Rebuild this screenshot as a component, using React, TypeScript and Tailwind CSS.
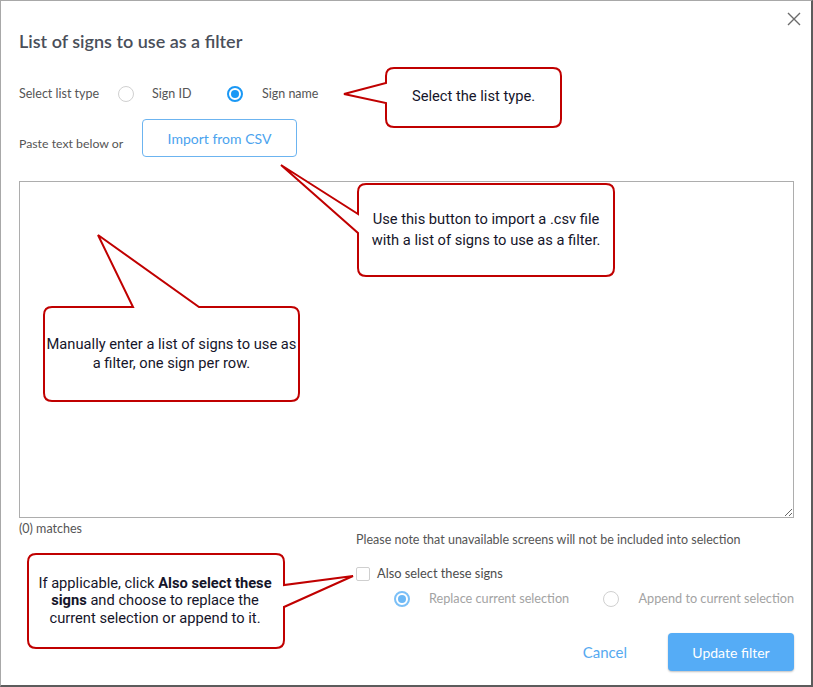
import React from "react";

const RED = "#c00000";

function Radio({ checked, disabled }: { checked?: boolean; disabled?: boolean }) {
  if (checked) {
    return (
      <span
        className={`flex h-[16px] w-[16px] shrink-0 items-center justify-center rounded-full border-2 ${
          disabled ? "border-[#7cc0f7]" : "border-[#1a98f5]"
        } bg-white`}
      >
        <span className={`h-[8px] w-[8px] rounded-full ${disabled ? "bg-[#6cb8f6]" : "bg-[#1a98f5]"}`} />
      </span>
    );
  }
  return <span className="h-[16px] w-[16px] shrink-0 rounded-full border border-[#d0d0d0] bg-white" />;
}

function Callouts() {
  return (
    <>
      <svg className="pointer-events-none absolute left-0 top-0" width={813} height={687} viewBox="0 0 813 687">
        <g fill="#fff" stroke={RED} strokeWidth={2} strokeLinejoin="miter">
          <path d="M 393 67 H 552 Q 560 67 560 75 V 118 Q 560 126 552 126 H 393 Q 385 126 385 118 V 102 L 343 93 L 385 82 V 75 Q 385 67 393 67 Z" />
          <path d="M 365 183 H 605 Q 613 183 613 191 V 267 Q 613 275 605 275 H 365 Q 357 275 357 267 V 232 L 280 164 L 357 213 V 191 Q 357 183 365 183 Z" />
          <path d="M 51 306 H 132 L 97 234 L 198 306 H 290 Q 298 306 298 314 V 392 Q 298 400 290 400 H 51 Q 43 400 43 392 V 314 Q 43 306 51 306 Z" />
          <path d="M 35 553 H 275 Q 283 553 283 561 V 584 L 352 575 L 283 606 V 639 Q 283 647 275 647 H 35 Q 27 647 27 639 V 561 Q 27 553 35 553 Z" />
        </g>
      </svg>
      <div className="pointer-events-none absolute left-[385px] top-[66px] flex h-[59px] w-[175px] items-center justify-center text-center font-['Roboto',sans-serif] text-[14.7px] text-[#15152a]">
        Select the list type.
      </div>
      <div className="pointer-events-none absolute left-[357px] top-[183px] flex h-[92px] w-[256px] items-center justify-center whitespace-nowrap text-center font-['Roboto',sans-serif] text-[14.7px] leading-[21px] text-[#15152a]">
        <span>
          Use this button to import a .csv file
          <br />
          with a list of signs to use as a filter.
        </span>
      </div>
      <div className="pointer-events-none absolute left-[43px] top-[306px] flex h-[94px] w-[255px] items-center justify-center whitespace-nowrap text-center font-['Roboto',sans-serif] text-[14.7px] leading-[19px] text-[#15152a]">
        <span>
          Manually enter a list of signs to use as
          <br />
          a filter, one sign per row.
        </span>
      </div>
      <div className="pointer-events-none absolute left-[26px] top-[553px] flex h-[94px] w-[256px] items-center justify-center whitespace-nowrap text-center font-['Roboto',sans-serif] text-[14.7px] leading-[17.5px] text-[#15152a]">
        <span>
          If applicable, click <b>Also select these</b>
          <br />
          <b>signs</b> and choose to replace the
          <br />
          current selection or append to it.
        </span>
      </div>
    </>
  );
}

export default function App() {
  return (
    <div className="relative h-[687px] w-[813px] overflow-hidden border-l border-t border-b-2 border-r-2 border-l-[#a8a8a8] border-t-[#a8a8a8] border-b-[#5c5c5c] border-r-[#5c5c5c] bg-white pl-[18px] pr-[17px] pt-[28px] font-['Lato',sans-serif] text-[#555]">
      <button className="absolute right-[10px] top-[11px] p-0 text-[#6b6b6b]">
        <svg width="14" height="14" viewBox="0 0 14 14" stroke="currentColor" strokeWidth={1.4}>
          <path d="M1 1L13 13M13 1L1 13" />
        </svg>
      </button>

      <h1 className="text-[18px] font-semibold leading-[24px] text-[#4a4f5a]">List of signs to use as a filter</h1>

      <div className="mt-[29px] flex h-[24px] items-center text-[12.5px]">
        <span className="w-[99px]">Select list type</span>
        <Radio />
        <span className="ml-[18px] w-[75px]">Sign ID</span>
        <Radio checked />
        <span className="ml-[19px]">Sign name</span>
      </div>

      <div className="mt-[13px] flex items-start text-[12.3px]">
        <span className="mt-[17px] w-[123px] leading-[16px]">Paste text below or</span>
        <button className="h-[38px] w-[155px] rounded-[4px] border border-[#6cb4f0] bg-white text-[14px] text-[#4ba3ee]">
          Import from CSV
        </button>
      </div>

      <textarea className="mt-[24px] block h-[337px] w-full rounded-none border border-[#adadad] outline-none" />

      <div className="mt-[3px] flex justify-between text-[12.5px]">
        <span className="leading-[16px]">(0) matches</span>
        <div className="w-[438px] pt-[11px]">
          <div className="whitespace-nowrap leading-[16px]">Please note that unavailable screens will not be included into selection</div>
          <div className="mt-[17px] flex h-[18px] items-center">
            <span className="h-[14px] w-[14px] rounded-[2px] border border-[#cfcfcf] bg-white" />
            <span className="ml-[7px] text-[12.8px] text-[#4d4d4d]">Also select these signs</span>
          </div>
          <div className="mt-[7px] flex h-[18px] items-center whitespace-nowrap pl-[38px] text-[12.7px] text-[#a3a3a3]">
            <Radio checked disabled />
            <span className="ml-[19px] w-[176px]">Replace current selection</span>
            <Radio />
            <span className="ml-[19px]">Append to current selection</span>
          </div>
        </div>
      </div>

      <div className="mt-[25px] flex items-center justify-end">
        <button className="mr-[41px] text-[15px] text-[#55a9f0]">Cancel</button>
        <button className="h-[38px] w-[126px] rounded-[4px] bg-[#55acf6] text-[14px] text-white shadow-[0_1px_2px_rgba(0,0,0,0.25)]">
          Update filter
        </button>
      </div>

      <Callouts />
    </div>
  );
}
